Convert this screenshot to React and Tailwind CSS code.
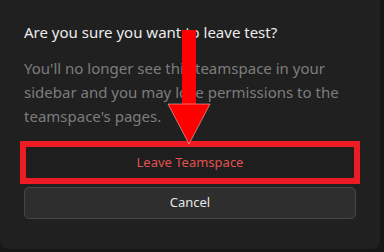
export default function App() {
  return (
    <div className="relative w-[384px] h-[252px] bg-[#161616] overflow-hidden" style={{ fontFamily: '"Noto Sans", "Open Sans", sans-serif' }}>
      <div className="w-[380px] h-[249px] bg-[#202020] rounded-b-[8px] flex flex-col px-[24px] pt-[21px]">
        <div className="text-[15px] leading-[22px] text-[#ececec] font-normal">Are you sure you want to leave test?</div>
        <div className="mt-[13px] text-[15px] leading-[24px] text-[#7d7d7d]">
          You'll no longer see this teamspace in your sidebar and you may lose permissions to the teamspace's pages.
        </div>
        <div className="mt-[18px] h-[33px] rounded-[4px] border border-[#4a2626] bg-[#1e1e1e] flex items-center justify-center text-[13px] text-[#e0524f]">
          Leave Teamspace
        </div>
        <div className="mt-[8px] h-[32px] rounded-[5px] border border-[#474747] bg-[#2e2e2e] flex items-center justify-center text-[13px] text-[#e6e6e6]">
          Cancel
        </div>
      </div>
      <div className="absolute left-[20px] top-[141px] w-[340px] h-[43px] border-[6px] border-[#ed1c24]" />
      <svg className="absolute left-0 top-0" width="384" height="252">
        <rect x="182" y="30" width="14" height="76" fill="#ff0000" />
        <polygon points="168,104 210,104 189,144" fill="#ff0000" stroke="#ffdddd" strokeWidth="0.5" />
      </svg>
    </div>
  );
}
